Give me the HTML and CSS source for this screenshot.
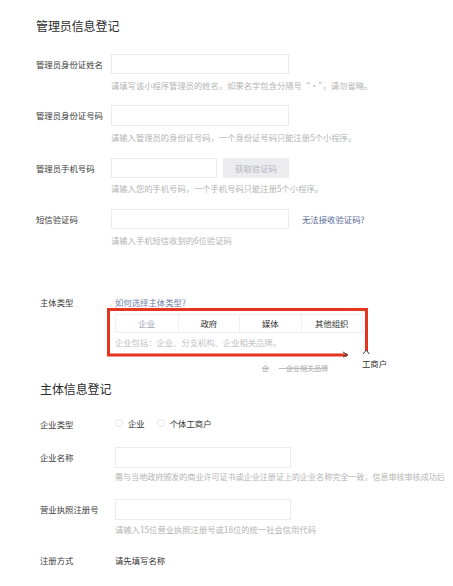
FILE: index.html
```html
<!DOCTYPE html>
<html lang="zh-CN">
<head>
<meta charset="utf-8">
<title>管理员信息登记</title>
<link rel="stylesheet" href="styles.css">
</head>
<body>
<div class="page">
  <section class="sec sec-admin">
    <h2 class="title title-admin">管理员信息登记</h2>

    <div class="row row1">
      <div class="label">管理员身份证姓名</div>
      <div class="field">
        <div class="input"></div>
        <div class="hint">请填写该小程序管理员的姓名，如果名字包含分隔号“·”，请勿省略。</div>
      </div>
    </div>

    <div class="row row2">
      <div class="label">管理员身份证号码</div>
      <div class="field">
        <div class="input"></div>
        <div class="hint">请输入管理员的身份证号码，一个身份证号码只能注册5个小程序。</div>
      </div>
    </div>

    <div class="row row3">
      <div class="label">管理员手机号码</div>
      <div class="field">
        <div class="inline">
          <div class="input input-short"></div>
          <div class="btn">获取验证码</div>
        </div>
        <div class="hint">请输入您的手机号码，一个手机号码只能注册5个小程序。</div>
      </div>
    </div>

    <div class="row row4">
      <div class="label">短信验证码</div>
      <div class="field">
        <div class="inline">
          <div class="input"></div>
          <a class="link link-sms">无法接收验证码?</a>
        </div>
        <div class="hint">请输入手机短信收到的6位验证码</div>
      </div>
    </div>
  </section>

  <section class="sec sec-type">
    <div class="row row-type">
      <div class="label label-type">主体类型</div>
      <div class="field">
        <a class="link link-type">如何选择主体类型?</a>
        <div class="tabs-wrap">
          <div class="tabs">
            <div class="tab tab-on">企业</div>
            <div class="tab">政府</div>
            <div class="tab">媒体</div>
            <div class="tab">其他组织</div>
          </div>
          <div class="tab-desc">企业包括：企业、分支机构、企业相关品牌。</div>
          <svg class="mark" width="270" height="56" viewBox="0 0 270 56">
            <path d="M240 47 L1.5 47 L1.5 1.5 L259.5 1.5 L259.5 43" fill="none" stroke="#e5341f" stroke-width="3"/>
            <path d="M236 44 L241 47 L236 49" fill="none" stroke="#444" stroke-width="1"/>
            <path d="M256 46 L259.5 42 L262 46" fill="none" stroke="#444" stroke-width="1"/>
          </svg>
          <div class="ghost ghost-gs">工商户</div>
          <div class="ghost ghost-line">
            <span class="g1">企</span><span class="g2">一企业相关品牌</span>
          </div>
        </div>
      </div>
    </div>

    <h2 class="title title-subject">主体信息登记</h2>

    <div class="row row-kind">
      <div class="label">企业类型</div>
      <div class="field radios">
        <span class="radio"></span><span class="radio-text">企业</span>
        <span class="radio radio2"></span><span class="radio-text">个体工商户</span>
      </div>
    </div>

    <div class="row row-name">
      <div class="label">企业名称</div>
      <div class="field">
        <div class="input input-b"></div>
        <div class="hint hint-b hint-long">需与当地政府颁发的商业许可证书或企业注册证上的企业名称完全一致，信息审核审核成功后</div>
      </div>
    </div>

    <div class="row row-license">
      <div class="label">营业执照注册号</div>
      <div class="field">
        <div class="input input-b"></div>
        <div class="hint hint-b">请输入15位营业执照注册号或18位的统一社会信用代码</div>
      </div>
    </div>

    <div class="row row-way">
      <div class="label">注册方式</div>
      <div class="field">
        <div class="value">请先填写名称</div>
      </div>
    </div>
  </section>
</div>
</body>
</html>
```

FILE: styles.css
```css
html, body {
  margin: 0;
  padding: 0;
  background: #ffffff;
}

body {
  width: 453px;
  height: 586px;
  overflow: hidden;
  font-family: "Noto Sans CJK SC", "Noto Sans", sans-serif;
  color: #353535;
}

.page {
  display: flex;
  flex-direction: column;
}

.sec-admin {
  padding-left: 36px;
}

.sec-type {
  padding-left: 40px;
}

.title {
  margin: 0;
  font-size: 12px;
  line-height: 16px;
  font-weight: 400;
  color: #2b2b2b;
  letter-spacing: -0.1px;
}

.title-admin {
  margin-top: 18px;
  margin-bottom: 20px;
}

.row {
  display: grid;
  grid-template-columns: 75px 1fr;
  align-items: start;
}

.label {
  font-size: 8.4px;
  line-height: 20px;
  color: #3a3a3a;
  white-space: nowrap;
}

.field {
  display: flex;
  flex-direction: column;
  min-width: 0;
}

.inline {
  display: flex;
  align-items: center;
}

.input {
  width: 178px;
  height: 20px;
  box-sizing: border-box;
  border: 1px solid #ececec;
  background: #fff;
}

.input-short {
  width: 106px;
}

.btn {
  margin-left: 6px;
  width: 66px;
  height: 20px;
  background: #ececee;
  color: #b3b5c2;
  font-size: 8.4px;
  line-height: 20px;
  text-align: center;
  border-radius: 1px;
}

.hint {
  margin-top: 6px;
  font-size: 8.3px;
  line-height: 10px;
  color: #b4b4b4;
  white-space: nowrap;
}

.row1 { margin-bottom: 15px; }
.row2 { margin-bottom: 16px; }
.row2 .input { height: 21px; }
.row3 { margin-bottom: 16px; }
.row3 .hint { margin-top: 5px; }
.row4 .hint { margin-top: 6px; }

.link {
  color: #576b95;
  font-size: 8.4px;
  line-height: 10px;
  text-decoration: none;
}

.link-sms {
  margin-left: 13px;
}

/* 主体类型 */
.row-type {
  margin-top: 52px;
}

.label-type {
  line-height: 10px;
}

.link-type {
  color: #6f80a8;
}

.tabs-wrap {
  position: relative;
  margin-top: 7px;
  width: 248px;
}

.tabs {
  display: grid;
  grid-template-columns: repeat(4, 1fr);
  border: 1px solid #f0f0f0;
  height: 19px;
  box-sizing: border-box;
}

.tab {
  font-size: 8.4px;
  line-height: 17px;
  text-align: center;
  color: #333;
  border-left: 1px solid #f0f0f0;
}

.tab:first-child {
  border-left: none;
}

.tab-on {
  color: #9aa3b8;
}

.tab-desc {
  margin-top: 4px;
  font-size: 8.3px;
  line-height: 10px;
  color: #c2c2c2;
  white-space: nowrap;
}

.mark {
  position: absolute;
  left: -8px;
  top: -6px;
  overflow: visible;
}

.ghost {
  position: absolute;
  font-size: 8.4px;
  line-height: 10px;
  color: #333;
  white-space: nowrap;
}

.ghost-gs {
  left: 247px;
  top: 44px;
}

.ghost-line {
  left: 147px;
  top: 50px;
  font-size: 7px;
  line-height: 8px;
  color: #aaa;
  text-decoration: line-through;
  text-decoration-color: #bbb;
}

.g2 {
  margin-left: 10px;
}

.title-subject {
  margin-top: 34px;
  margin-bottom: 21px;
}

/* 企业类型 */
.row-kind .label {
  line-height: 12px;
}

.radios {
  flex-direction: row;
  align-items: center;
  height: 12px;
  font-size: 8.4px;
  color: #333;
}

.radio {
  width: 8px;
  height: 8px;
  border: 1px solid #e6e6e6;
  border-radius: 50%;
  box-sizing: border-box;
  margin-left: 0;
  margin-right: 5px;
  margin-top: -2px;
}

.radio2 {
  margin-left: 12px;
}

.radio-text {
  line-height: 12px;
  margin-top: -2px;
}

.row-kind {
  margin-bottom: 17px;
}

.input-b {
  width: 176px;
  height: 21px;
}

.row-name .label,
.row-license .label {
  line-height: 21px;
}

.hint-b {
  margin-top: 4px;
}

.hint-long {
  font-size: 8.1px;
  letter-spacing: -0.05px;
}

.row-name {
  margin-bottom: 17px;
}

.row-license {
  margin-bottom: 21px;
}

.row-way .label {
  line-height: 10px;
}

.value {
  font-size: 8.4px;
  line-height: 10px;
  color: #333;
}
```
